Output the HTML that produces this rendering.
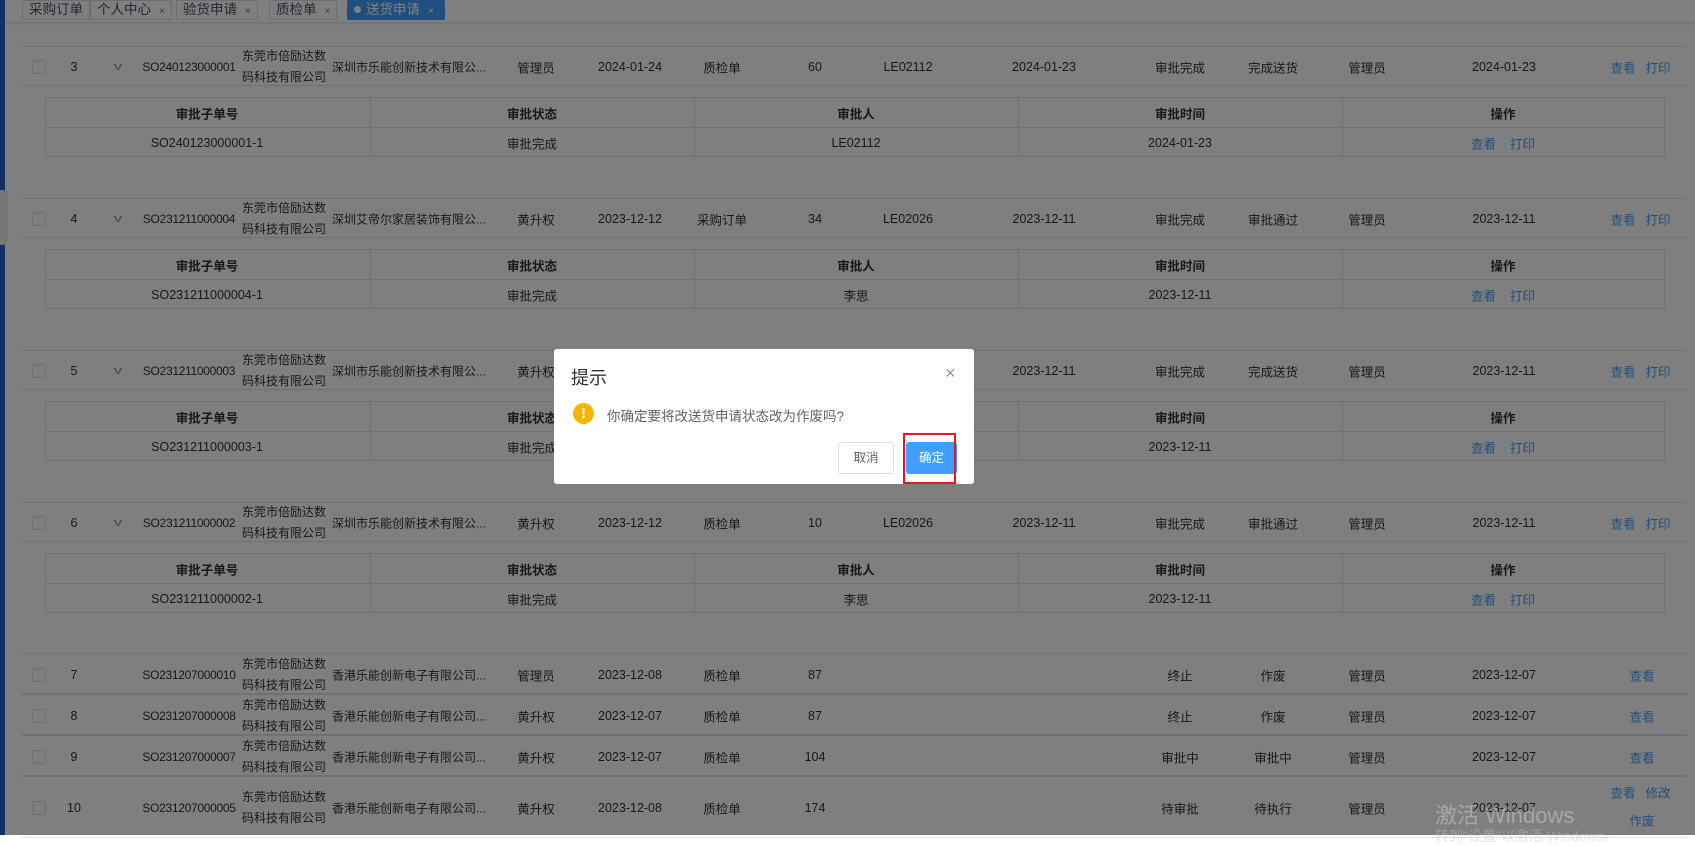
<!DOCTYPE html>
<html><head><meta charset="utf-8"><style>
*{margin:0;padding:0;box-sizing:border-box}
body{width:1695px;height:835px;overflow:hidden;background:#fff;font-family:"Liberation Sans","Noto Sans CJK SC",sans-serif;font-size:12.5px;color:#303133;position:relative}
.a{position:absolute}
.tabs{position:absolute;left:5px;top:0;width:1690px;height:23px;background:#fff;border-bottom:1px solid #e4e7ed;box-shadow:0 1px 3px rgba(0,0,0,.1)}
.tab{position:absolute;top:0;height:20px;border:1px solid #d8dce5;font-size:13.5px;line-height:18px;padding:0 6px;color:#495060;background:#fff;border-radius:2px}
.tab i{font-style:normal;font-size:10px;margin-left:8px;color:#777}
.row{position:absolute;left:22px;width:1665px;border-top:1px solid #dfe3ee;border-bottom:1px solid #dfe3ee}
.c{position:absolute;transform:translate(-50%,-50%);white-space:nowrap;text-align:center}
.l{position:absolute;transform:translateY(-50%);white-space:nowrap}
.cb{position:absolute;left:10px;width:14px;height:14px;border:1px solid #dcdfe6;border-radius:2px;background:#fff;transform:translateY(-50%)}
.lk{color:#409eff}
.sub{position:absolute;left:23px;width:1620px;border:1px solid #dfe3ee}
.sub div{position:absolute;top:0;bottom:0;border-left:1px solid #dfe3ee}
.mask{position:absolute;left:0;top:0;width:1695px;height:835px;background:rgba(0,0,0,.5)}
</style></head><body>
<div class="tabs">
<div class="tab" style="left:17px">采购订单</div>
<div class="tab" style="left:85px">个人中心<i>×</i></div>
<div class="tab" style="left:171px">验货申请<i>×</i></div>
<div class="tab" style="left:264px">质检单<i>×</i></div>
<div class="tab" style="left:342px;width:98px;background:#409eff;color:#fff;border-color:#409eff"><span style="display:inline-block;width:7px;height:7px;border-radius:50%;background:#fff;margin-right:5px;vertical-align:1px"></span>送货申请<i style="color:#fff">×</i></div>
</div>
<div class="a" style="left:0;top:0;width:5px;height:835px;background:#2b5cc8"></div>
<div class="a" style="left:0;top:190px;width:8px;height:55px;background:#eee;border-radius:0 6px 6px 0"></div>

<div id="rows"></div>
<script>
function row(top,h,d,acts,sub){
 let s=`<div class="row" style="top:${top}px;height:${h}px">`;
 const m=h/2;
 s+=`<div class="cb" style="top:${m}px"></div>`;
 s+=`<span class="c" style="left:${74-22}px;top:${m}px">${d[0]}</span>`;
 if(d.arrow) s+=`<span class="c" style="left:${118-22}px;top:${m}px;color:#999;font-size:11px;transform:translate(-50%,-50%) scaleX(1.6)">v</span>`;
 s+=`<span class="c" style="left:${189-22}px;top:${m}px;font-size:12px;letter-spacing:-0.3px">${d[1]}</span>`;
 s+=`<span class="c" style="left:${284-22}px;top:${m}px;line-height:21px;font-size:12px">东莞市倍励达数<br>码科技有限公司</span>`;
 s+=`<span class="l" style="left:${332-22}px;top:${m}px;font-size:12px">${d[2]}</span>`;
 const xs=[536,630,722,815,908,1044,1180,1273,1367,1504];
 for(let i=0;i<10;i++) if(d[3+i]) s+=`<span class="c" style="left:${xs[i]-22}px;top:${m}px">${d[3+i]}</span>`;
 s+=acts.replace(/M/g,m);
 s+='</div>';
 if(sub){
  const st=top+51;
  s+=`<div class="sub" style="top:${st}px;height:60px;left:45px">`;
  [370,694,1018,1342].forEach(x=>s+=`<div style="left:${x-46}px"></div>`);
  s+=`<div style="left:0;right:0;top:29px;bottom:auto;height:0;border-left:0;border-top:1px solid #dfe3ee"></div>`;
  const cx=[207,532,856,1180,1503];
  const hd=['审批子单号','审批状态','审批人','审批时间','操作'];
  hd.forEach((t,i)=>s+=`<span class="c" style="left:${cx[i]-46}px;top:15px;font-weight:bold">${t}</span>`);
  sub.forEach((t,i)=>s+=`<span class="c" style="left:${cx[i]-46}px;top:45px">${t}</span>`);
  s+=`<span class="c" style="left:${1503-46}px;top:45px"><span class="lk">查看</span>&nbsp;&nbsp;&nbsp;&nbsp;<span class="lk">打印</span></span>`;
  s+='</div>';
 }
 return s;
}
const A2=`<span class="c lk" style="left:${1623-22}px;top:Mpx">查看</span><span class="c lk" style="left:${1658-22}px;top:Mpx">打印</span>`;
const A1=`<span class="c lk" style="left:${1642-22}px;top:Mpx">查看</span>`;
let h='';
function D(a,arrow){a.arrow=arrow;return a;}
h+=row(46,40,D(['3','SO240123000001','深圳市乐能创新技术有限公...','管理员','2024-01-24','质检单','60','LE02112','2024-01-23','审批完成','完成送货','管理员','2024-01-23'],1),A2,['SO240123000001-1','审批完成','LE02112','2024-01-23']);
h+=row(198,40,D(['4','SO231211000004','深圳艾帝尔家居装饰有限公...','黄升权','2023-12-12','采购订单','34','LE02026','2023-12-11','审批完成','审批通过','管理员','2023-12-11'],1),A2,['SO231211000004-1','审批完成','李思','2023-12-11']);
h+=row(350,40,D(['5','SO231211000003','深圳市乐能创新技术有限公...','黄升权','2023-12-12','质检单','10','LE02026','2023-12-11','审批完成','完成送货','管理员','2023-12-11'],1),A2,['SO231211000003-1','审批完成','李思','2023-12-11']);
h+=row(502,40,D(['6','SO231211000002','深圳市乐能创新技术有限公...','黄升权','2023-12-12','质检单','10','LE02026','2023-12-11','审批完成','审批通过','管理员','2023-12-11'],1),A2,['SO231211000002-1','审批完成','李思','2023-12-11']);
h+=row(653,41,D(['7','SO231207000010','香港乐能创新电子有限公司...','管理员','2023-12-08','质检单','87','','','终止','作废','管理员','2023-12-07'],0),A1);
h+=row(694,41,D(['8','SO231207000008','香港乐能创新电子有限公司...','黄升权','2023-12-07','质检单','87','','','终止','作废','管理员','2023-12-07'],0),A1);
h+=row(735,41,D(['9','SO231207000007','香港乐能创新电子有限公司...','黄升权','2023-12-07','质检单','104','','','审批中','审批中','管理员','2023-12-07'],0),A1);
h+=row(776,62,D(['10','SO231207000005','香港乐能创新电子有限公司...','黄升权','2023-12-08','质检单','174','','','待审批','待执行','管理员','2023-12-07'],0),`<span class="c lk" style="left:${1623-22}px;top:15px">查看</span><span class="c lk" style="left:${1658-22}px;top:15px">修改</span><span class="c lk" style="left:${1642-22}px;top:43px">作废</span>`);
document.getElementById('rows').innerHTML=h;
</script>
<div class="mask"></div>
<div class="a" style="left:1435px;top:798px;font-size:22px;color:rgba(200,200,200,.55)">激活 Windows</div>
<div class="a" style="left:1435px;top:826px;font-size:14px;color:rgba(200,200,200,.45)">转到"设置"以激活 Windows。</div>

<div class="a" style="left:554px;top:349px;width:420px;height:135px;background:#fff;border-radius:3px">
 <div class="a" style="left:17px;top:15px;font-size:18px;color:#303133">提示</div>
 <div class="a" style="left:391px;top:14px;font-size:18px;color:#909399;font-weight:300">×</div>
 <div class="a" style="left:19px;top:54px;width:21px;height:21px;border-radius:50%;background:#f7b500;color:#fff;font-weight:bold;text-align:center;line-height:21px;font-size:15px">!</div>
 <div class="a" style="left:53px;top:56px;font-size:13.5px;color:#606266">你确定要将改送货申请状态改为作废吗?</div>
 <div class="a" style="left:284px;top:93px;width:56px;height:32px;border:1px solid #dcdfe6;border-radius:3px;text-align:center;line-height:30px;font-size:12.5px;color:#606266">取消</div>
 <div class="a" style="left:352px;top:93px;width:51px;height:32px;background:#409eff;border-radius:3px;text-align:center;line-height:32px;font-size:12.5px;color:#fff">确定</div>
 <div class="a" style="left:349px;top:84px;width:53px;height:51px;border:2px solid #e81818"></div>
</div>
</body></html>
